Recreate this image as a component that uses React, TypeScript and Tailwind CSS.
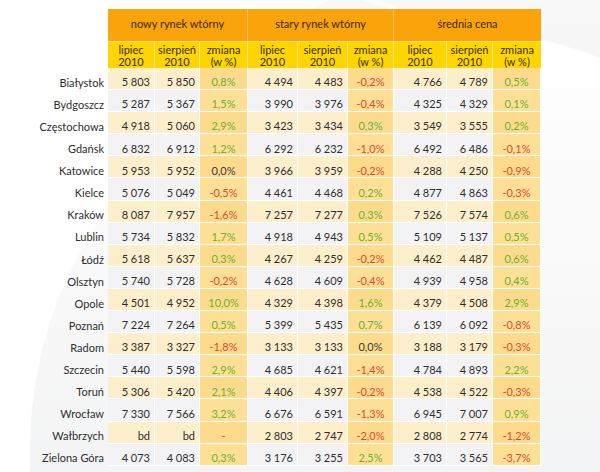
import React from "react"

type Row = string[]

const rows: Row[] = [
  ["Białystok", "5 803", "5 850", "0,8%", "4 494", "4 483", "-0,2%", "4 766", "4 789", "0,5%"],
  ["Bydgoszcz", "5 287", "5 367", "1,5%", "3 990", "3 976", "-0,4%", "4 325", "4 329", "0,1%"],
  ["Częstochowa", "4 918", "5 060", "2,9%", "3 423", "3 434", "0,3%", "3 549", "3 555", "0,2%"],
  ["Gdańsk", "6 832", "6 912", "1,2%", "6 292", "6 232", "-1,0%", "6 492", "6 486", "-0,1%"],
  ["Katowice", "5 953", "5 952", "0,0%", "3 966", "3 959", "-0,2%", "4 288", "4 250", "-0,9%"],
  ["Kielce", "5 076", "5 049", "-0,5%", "4 461", "4 468", "0,2%", "4 877", "4 863", "-0,3%"],
  ["Kraków", "8 087", "7 957", "-1,6%", "7 257", "7 277", "0,3%", "7 526", "7 574", "0,6%"],
  ["Lublin", "5 734", "5 832", "1,7%", "4 918", "4 943", "0,5%", "5 109", "5 137", "0,5%"],
  ["Łódź", "5 618", "5 637", "0,3%", "4 267", "4 259", "-0,2%", "4 462", "4 487", "0,6%"],
  ["Olsztyn", "5 740", "5 728", "-0,2%", "4 628", "4 609", "-0,4%", "4 939", "4 958", "0,4%"],
  ["Opole", "4 501", "4 952", "10,0%", "4 329", "4 398", "1,6%", "4 379", "4 508", "2,9%"],
  ["Poznań", "7 224", "7 264", "0,5%", "5 399", "5 435", "0,7%", "6 139", "6 092", "-0,8%"],
  ["Radom", "3 387", "3 327", "-1,8%", "3 133", "3 133", "0,0%", "3 188", "3 179", "-0,3%"],
  ["Szczecin", "5 440", "5 598", "2,9%", "4 685", "4 621", "-1,4%", "4 784", "4 893", "2,2%"],
  ["Toruń", "5 306", "5 420", "2,1%", "4 406", "4 397", "-0,2%", "4 538", "4 522", "-0,3%"],
  ["Wrocław", "7 330", "7 566", "3,2%", "6 676", "6 591", "-1,3%", "6 945", "7 007", "0,9%"],
  ["Wałbrzych", "bd", "bd", "-", "2 803", "2 747", "-2,0%", "2 808", "2 774", "-1,2%"],
  ["Zielona Góra", "4 073", "4 083", "0,3%", "3 176", "3 255", "2,5%", "3 703", "3 565", "-3,7%"],
]

const groups = ["nowy rynek wtórny", "stary rynek wtórny", "średnia cena"]

function changeColor(v: string) {
  if (v === "0,0%") return "text-[#3a3a3a]"
  if (v.startsWith("-")) return "text-[#e5472d]"
  return "text-[#6bb033]"
}

export default function App() {
  return (
    <div
      className="relative w-[600px] h-[472px] overflow-hidden bg-white text-[11px] text-[#2e2e2e]"
      style={{ fontFamily: "Lato, 'Open Sans', sans-serif" }}
    >
      <svg className="absolute inset-0" width="600" height="472" viewBox="0 0 600 472">
        <defs>
          <linearGradient id="bgfade" x1="0" y1="0" x2="0" y2="1">
            <stop offset="0" stopColor="#ffffff" />
            <stop offset="1" stopColor="#e9eaec" />
          </linearGradient>
          <linearGradient id="rightfade" x1="0" y1="0" x2="0" y2="1">
            <stop offset="0" stopColor="#f8f8f9" />
            <stop offset="1" stopColor="#eceef0" />
          </linearGradient>
        </defs>
        <rect x="0" y="0" width="600" height="472" fill="url(#rightfade)" />
        <path d="M0 0 H330 C250 40 140 120 100 240 C80 310 50 400 30 472 H0 Z" fill="#ffffff" />
        <circle cx="450" cy="450" r="420" fill="url(#bgfade)" />
        <path d="M360 0 C420 15 450 40 470 60 C440 30 410 12 380 0 Z" fill="#ffffff" opacity="0.8" />
      </svg>

      <div className="relative pt-[9px]">
        <div className="grid grid-cols-[108px_47px_45px_48px_50px_50px_46px_53px_46px_48px] grid-rows-[32px_27px_repeat(18,22.1px)]">
          <div />
          {groups.map((g, i) => (
            <div
              key={g}
              className={`col-span-3 flex items-center justify-center pb-[2px] bg-[#fba30a] text-[#3b2a10] ${
                i < 2 ? "border-r border-[#fcc160]" : ""
              }`}
            >
              {g}
            </div>
          ))}

          <div />
          {groups.map((g, gi) =>
            [
              ["lipiec", "2010"],
              ["sierpień", "2010"],
              ["zmiana", "(w %)"],
            ].map(([a, b], ci) => (
              <div
                key={g + a}
                className={`flex flex-col items-center justify-center pt-[1px] bg-[#fdd500] leading-[12px] text-[#3b2f10] border-t border-[#fde37a] ${
                  ci < 2 || gi < 2 ? "border-r border-r-[#fde58a]" : ""
                }`}
              >
                <span>{a}</span>
                <span>{b}</span>
              </div>
            ))
          )}

          {rows.map((r, ri) => {
            const cream = ri % 2 === 0
            return (
              <React.Fragment key={r[0]}>
                <div className="flex items-center justify-end pr-[4px] pt-[8px]">{r[0]}</div>
                {r.slice(1).map((v, ci) => {
                  const isChange = ci % 3 === 2
                  const bg = isChange
                    ? cream
                      ? "bg-[#fcdc8c]"
                      : "bg-[#fde096]"
                    : cream
                      ? "bg-[#fdefcc]"
                      : "bg-[#f3f3f5]"
                  return (
                    <div
                      key={ci}
                      className={`flex items-center pt-[8px] border-b border-r border-white ${bg} ${
                        isChange ? `justify-center ${changeColor(v)}` : "justify-end pr-[4px]"
                      }`}
                    >
                      {v}
                    </div>
                  )
                })}
              </React.Fragment>
            )
          })}
        </div>
      </div>
    </div>
  )
}
